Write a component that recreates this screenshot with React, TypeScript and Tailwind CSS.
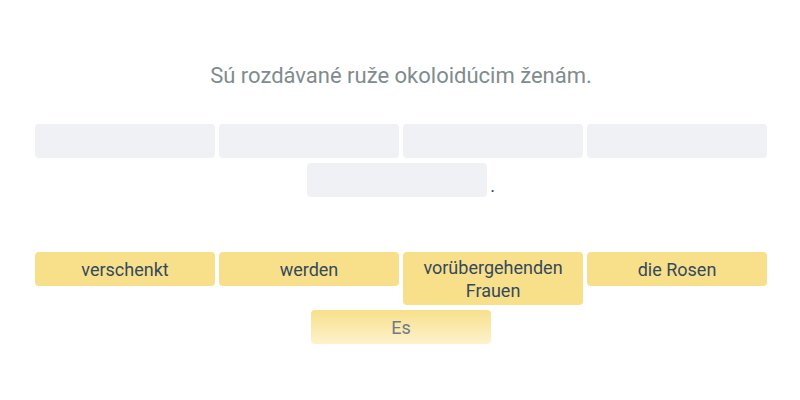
const slots = [0, 1, 2, 3, 4];

const words = ['verschenkt', 'werden', 'vorübergehenden Frauen', 'die Rosen'];

export default function App() {
  return (
    <div
      className="min-h-[400px] bg-white pl-[35px] pr-[33px] pt-[62px]"
      style={{ fontFamily: 'Roboto, "Noto Sans", sans-serif' }}
    >
      <h1 className="text-center text-[22px] leading-[28px] text-[#7f8c8d]">
        Sú rozdávané ruže okoloidúcim ženám.
      </h1>

      <div className="mt-[34px] flex flex-wrap items-end justify-center gap-x-1 gap-y-[5px]">
        {slots.map((s) => (
          <div key={s} className="h-[34px] w-[180px] rounded bg-[#f0f1f4]" />
        ))}
        <span className="-ml-px text-[18px] leading-[22px] text-[#34495e]">.</span>
      </div>

      <div className="mt-[55px] flex flex-wrap items-start justify-center gap-x-1 gap-y-[5px]">
        {words.map((w) => (
          <div
            key={w}
            className="flex min-h-[34px] w-[180px] items-center justify-center rounded bg-[#f8e08a] px-2 py-[3.5px] text-center text-[18px] leading-[23px] text-[#34495e]"
          >
            {w}
          </div>
        ))}
        <div className="flex min-h-[34px] w-[180px] items-center justify-center rounded bg-gradient-to-b from-[#f8e08a] to-[#fdf2cb] px-2 text-[18px] leading-[23px] text-[#6f7b86]">
          Es
        </div>
      </div>
    </div>
  );
}
